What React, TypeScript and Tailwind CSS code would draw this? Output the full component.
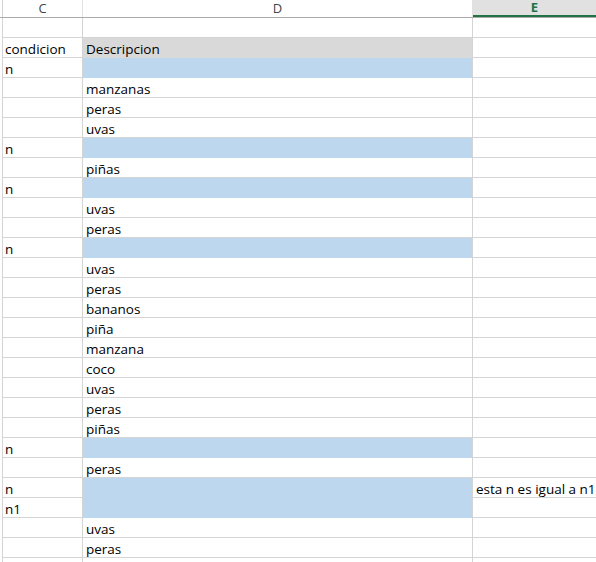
type Row = {
  c?: string;
  d?: string;
  e?: string;
  fill?: "blue" | "gray";
};

const rows: Row[] = [
  {},
  { c: "condicion", d: "Descripcion", fill: "gray" },
  { c: "n", fill: "blue" },
  { d: "manzanas" },
  { d: "peras" },
  { d: "uvas" },
  { c: "n", fill: "blue" },
  { d: "piñas" },
  { c: "n", fill: "blue" },
  { d: "uvas" },
  { d: "peras" },
  { c: "n", fill: "blue" },
  { d: "uvas" },
  { d: "peras" },
  { d: "bananos" },
  { d: "piña" },
  { d: "manzana" },
  { d: "coco" },
  { d: "uvas" },
  { d: "peras" },
  { d: "piñas" },
  { c: "n", fill: "blue" },
  { d: "peras" },
  { c: "n", fill: "blue", e: "esta n es igual a n1" },
  { c: "n1", fill: "blue" },
  { d: "uvas" },
  { d: "peras" },
  {},
];

const dFill = (r: Row): string => {
  if (r.fill === "blue") return "bg-[#bdd7ee] border-b-[#bdd7ee]";
  if (r.fill === "gray") return "bg-[#d9d9d9] border-b-[#d9d9d9]";
  return "border-b-[#d4d4d4]";
};

const App = (): JSX.Element => {
  return (
    <div
      className="w-[596px] h-[562px] overflow-hidden bg-white text-[13.5px] text-black"
      style={{ fontFamily: '"Open Sans", "Liberation Sans", sans-serif' }}
    >
      {/* column headers */}
      <div className="flex h-[18px] border-b border-[#ababab] text-[13px] leading-none text-[#444]">
        <div className="w-[3px] shrink-0 border-r border-[#d4d4d4]" />
        <div className="w-[80px] shrink-0 flex items-center justify-center border-r border-[#e2e2e2]">C</div>
        <div className="w-[390px] shrink-0 flex items-center justify-center border-r border-[#e2e2e2]">D</div>
        <div className="flex-1 h-[17px] flex items-center justify-center bg-[#e1e1e1] border-b-2 border-[#217346] font-bold text-[#217346]">
          E
        </div>
      </div>

      {rows.map((r, i) => (
        <div key={i} className="flex h-[20px]">
          <div className="w-[3px] shrink-0 border-r border-[#d4d4d4]" />
          <div className="w-[80px] shrink-0 flex items-end pl-[2px] leading-none border-r border-b border-[#d4d4d4]">
            <span className="pb-[1px]">{r.c}</span>
          </div>
          <div
            className={`w-[390px] shrink-0 flex items-end pl-[3px] leading-none border-r border-b border-r-[#d4d4d4] ${dFill(r)}`}
          >
            <span className="pb-[1px]">{r.d}</span>
          </div>
          <div className="flex-1 flex items-end pl-[3px] leading-none border-b border-[#d4d4d4] whitespace-nowrap">
            <span className="pb-[1px]">{r.e}</span>
          </div>
        </div>
      ))}
    </div>
  );
};

export default App;
